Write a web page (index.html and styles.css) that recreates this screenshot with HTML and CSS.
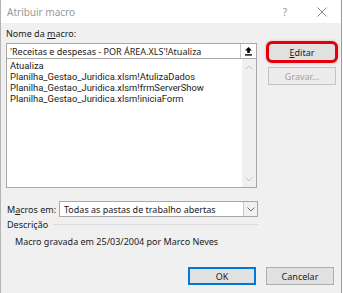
FILE: index.html
```html
<!DOCTYPE html>
<html lang="pt">
<head>
  <meta charset="UTF-8" />
  <title>Atribuir macro</title>
  <link rel="stylesheet" href="styles.css">
</head>
<body>
  <div class="dialog">
    <div class="titlebar">
      <span class="title">Atribuir macro</span>
      <span class="help">?</span>
      <svg class="close" width="10" height="10" viewBox="0 0 10 10"><path d="M0.5 0.5 L9.5 9.5 M9.5 0.5 L0.5 9.5" stroke="#8a8a8a" stroke-width="1" fill="none"/></svg>
    </div>
    <div class="content">
      <div class="main">
        <div class="left">
          <div class="label">Nome da <u>m</u>acro:</div>
          <div class="name-box">
            <span class="name-text">'Receitas e despesas - POR ÁREA.XLS'!Atualiza</span>
            <span class="upload">
              <svg width="9" height="10" viewBox="0 0 9 10"><path d="M4.5 1 L1 4.5 H3.2 V7 H5.8 V4.5 H8 Z" fill="#000"/><rect x="1" y="8.2" width="7" height="1.4" fill="#000"/></svg>
            </span>
          </div>
          <div class="list">
            <div class="items">
              <div>Atualiza</div>
              <div>Planilha_Gestao_Juridica.xlsm!AtulizaDados</div>
              <div>Planilha_Gestao_Juridica.xlsm!frmServerShow</div>
              <div>Planilha_Gestao_Juridica.xlsm!iniciaForm</div>
            </div>
            <div class="scroll">
              <svg width="8" height="5" viewBox="0 0 8 5"><path d="M0.5 4.5 L4 1 L7.5 4.5" stroke="#bdbdbd" fill="none"/></svg>
              <svg width="8" height="5" viewBox="0 0 8 5"><path d="M0.5 0.5 L4 4 L7.5 0.5" stroke="#bdbdbd" fill="none"/></svg>
            </div>
          </div>
        </div>
        <div class="right">
          <button class="btn highlight"><u>E</u>ditar</button>
          <button class="btn disabled">Gravar...</button>
        </div>
      </div>
      <div class="macros-row">
        <span class="macros-label">M<u>a</u>cros em:</span>
        <div class="select">
          <span class="select-text">Todas as pastas de trabalho abertas</span>
          <span class="drop">
            <svg width="8" height="5" viewBox="0 0 8 5"><path d="M0.5 0.5 L4 4 L7.5 0.5" stroke="#707070" fill="none"/></svg>
          </span>
        </div>
      </div>
      <div class="desc-head">
        <span>Descrição</span>
        <span class="rule"></span>
      </div>
      <div class="desc">Macro gravada em 25/03/2004 por Marco Neves</div>
      <div class="footer">
        <button class="btn default">OK</button>
        <button class="btn">Cancelar</button>
      </div>
    </div>
  </div>
</body>
</html>
```

FILE: styles.css
```css
body {
  margin: 0;
  background: #fff;
  font-family: "Noto Sans", "Open Sans", sans-serif;
  font-size: 9px;
  color: #1a1a1a;
}
.dialog {
  width: 340px;
  height: 293px;
  background: #f0f0f0;
  border-left: 1px solid #b4b4b4;
  border-right: 1px solid #9a9a9a;
  display: flex;
  flex-direction: column;
}
.titlebar {
  height: 23px;
  background: #fff;
  display: flex;
  align-items: center;
  padding-left: 6px;
}
.title {
  color: #999;
  font-size: 10px;
  flex: 1;
}
.help {
  color: #999;
  font-size: 10px;
  margin-right: 30px;
}
.close {
  margin-right: 14px;
}
.content {
  padding: 5px 0 0 5px;
}
.main {
  display: flex;
}
.left {
  width: 251px;
}
.label {
  height: 12px;
  line-height: 12px;
  margin-bottom: 3px;
}
.name-box {
  height: 14px;
  border: 1px solid #a8a8a8;
  background: #fff;
  display: flex;
  align-items: center;
}
.name-text {
  flex: 1;
  padding-left: 3px;
  white-space: nowrap;
}
.upload {
  width: 15px;
  height: 14px;
  border-left: 1px solid #c8c8c8;
  display: flex;
  align-items: center;
  justify-content: center;
}
.list {
  height: 128px;
  border: 1px solid #a8a8a8;
  border-top: none;
  background: #fff;
  display: flex;
}
.items {
  flex: 1;
  padding: 1px 0 0 3px;
  font-family: Roboto, "Noto Sans", sans-serif;
  font-size: 9.4px;
  line-height: 11px;
}
.scroll {
  width: 14px;
  background: #f0f0f0;
  display: flex;
  flex-direction: column;
  justify-content: space-between;
  align-items: center;
  padding: 6px 0 5px;
}
.right {
  width: 68px;
  margin-left: 11px;
  padding-top: 15px;
  display: flex;
  flex-direction: column;
  gap: 6px;
}
.btn {
  font-family: inherit;
  font-size: 9px;
  color: #1a1a1a;
  width: 68px;
  height: 18px;
  padding: 0;
  background: #e1e1e1;
  border: 1px solid #adadad;
}
.highlight {
  outline: 3px solid #e3000b;
  outline-offset: -1px;
  border-radius: 4px;
  box-shadow: 0 0 3px 2px rgba(200, 0, 0, 0.25);
}
.disabled {
  color: #a0a0a0;
  background: #ececec;
  border-color: #c4c4c4;
}
.macros-row {
  display: flex;
  align-items: center;
  margin-top: 13px;
}
.macros-label {
  width: 52px;
  padding-left: 1px;
}
.select {
  width: 197px;
  height: 14px;
  border: 1px solid #a8a8a8;
  background: #fff;
  display: flex;
  align-items: center;
}
.select-text {
  flex: 1;
  padding-left: 4px;
}
.drop {
  width: 13px;
  height: 14px;
  border-left: 1px solid #c8c8c8;
  background: #f0f0f0;
  display: flex;
  align-items: center;
  justify-content: center;
}
.desc-head {
  display: flex;
  align-items: center;
  width: 251px;
  height: 12px;
  margin-top: 1px;
  padding-left: 1px;
}
.rule {
  flex: 1;
  height: 1px;
  background: #dcdcdc;
  margin-left: 5px;
}
.desc {
  margin-top: 6px;
  padding-left: 9px;
  line-height: 12px;
}
.footer {
  display: flex;
  gap: 10px;
  margin-top: 19px;
  padding-left: 182px;
}
.default {
  border: 1px solid #0078d7;
  box-shadow: inset 0 0 0 1px #0078d7;
}
```
